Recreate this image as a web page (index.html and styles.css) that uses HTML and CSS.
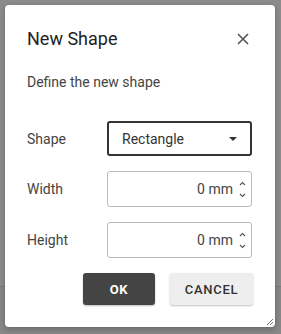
FILE: index.html
```html
<!DOCTYPE html>
<html lang="en">
<head>
    <meta charset="UTF-8">
    <title>New Shape</title>
    <link rel="stylesheet" href="styles.css">
</head>
<body>
    <div class="backdrop">
        <div class="dialog">
            <div class="dialog-header">
                <h2 class="dialog-title">New Shape</h2>
                <button class="close-btn" type="button">
                    <svg width="12" height="12" viewBox="0 0 12 12"><path d="M1 1L11 11M11 1L1 11" stroke="#555" stroke-width="1.6" fill="none"/></svg>
                </button>
            </div>
            <p class="dialog-desc">Define the new shape</p>

            <div class="form-row">
                <label class="form-label">Shape</label>
                <div class="select-box">
                    <span>Rectangle</span>
                    <svg width="8" height="4" viewBox="0 0 8 4"><path d="M0 0H8L4 4Z" fill="#333"/></svg>
                </div>
            </div>
            <div class="form-row">
                <label class="form-label">Width</label>
                <div class="number-box">
                    <span>0 mm</span>
                    <span class="spinner">
                        <svg width="7" height="5" viewBox="0 0 7 5"><path d="M1 4L3.5 1.5L6 4" stroke="#555" stroke-width="1.1" fill="none"/></svg>
                        <svg width="7" height="5" viewBox="0 0 7 5"><path d="M1 1L3.5 3.5L6 1" stroke="#555" stroke-width="1.1" fill="none"/></svg>
                    </span>
                </div>
            </div>
            <div class="form-row">
                <label class="form-label">Height</label>
                <div class="number-box">
                    <span>0 mm</span>
                    <span class="spinner">
                        <svg width="7" height="5" viewBox="0 0 7 5"><path d="M1 4L3.5 1.5L6 4" stroke="#555" stroke-width="1.1" fill="none"/></svg>
                        <svg width="7" height="5" viewBox="0 0 7 5"><path d="M1 1L3.5 3.5L6 1" stroke="#555" stroke-width="1.1" fill="none"/></svg>
                    </span>
                </div>
            </div>

            <div class="dialog-actions">
                <button class="btn btn-ok" type="button">OK</button>
                <button class="btn btn-cancel" type="button">CANCEL</button>
            </div>
            <svg class="resize-grip" width="7" height="7" viewBox="0 0 7 7"><path d="M1 7L7 1M4 7L7 4" stroke="#666" stroke-width="0.9" fill="none"/></svg>
        </div>
    </div>
</body>
</html>
```

FILE: styles.css
```css
body {
    margin: 0;
    font-family: Roboto, "Liberation Sans", sans-serif;
    background: linear-gradient(to bottom, #8c8c8c 0, #8c8c8c 286px, #777 286px, #777 287px, #888 287px);
}
.backdrop {
    width: 281px;
    height: 334px;
    padding: 5px 6px 0 5px;
    box-sizing: border-box;
}
.dialog {
    position: relative;
    width: 270px;
    height: 322px;
    background-color: #fff;
    border-radius: 4px;
    box-shadow: 0 2px 6px rgba(0, 0, 0, 0.25);
    padding: 0 22px 0 22px;
    box-sizing: border-box;
}
.dialog-header {
    display: flex;
    justify-content: space-between;
    align-items: center;
    padding-top: 23px;
}
.dialog-title {
    margin: 0;
    font-size: 18px;
    font-weight: 400;
    color: #222;
    line-height: 22px;
}
.close-btn {
    background: none;
    border: none;
    padding: 0;
    margin-right: 4px;
    width: 12px;
    height: 12px;
    display: flex;
}
.dialog-desc {
    margin: 24px 0 30px 0;
    font-size: 14px;
    color: #444;
    line-height: 17px;
}
.form-row {
    display: flex;
    align-items: center;
    margin-bottom: 15px;
}
.form-label {
    width: 80px;
    font-size: 14px;
    color: #444;
}
.select-box {
    width: 145px;
    height: 35px;
    border: 2px solid #333;
    border-radius: 3px;
    box-sizing: border-box;
    display: flex;
    justify-content: space-between;
    align-items: center;
    padding: 0 13px 0 13px;
    font-size: 14px;
    color: #333;
}
.number-box {
    width: 145px;
    height: 36px;
    border: 1px solid #bbb;
    border-radius: 3px;
    box-sizing: border-box;
    display: flex;
    justify-content: flex-end;
    align-items: center;
    padding: 0 5px 0 10px;
    font-size: 14px;
    color: #444;
}
.spinner {
    display: flex;
    flex-direction: column;
    gap: 7px;
    margin-left: 6px;
}
.spinner svg {
    display: block;
}
.dialog-actions {
    display: flex;
    justify-content: flex-end;
    gap: 15px;
}
.btn {
    height: 32px;
    border: none;
    border-radius: 3px;
    font-family: Roboto, "Liberation Sans", sans-serif;
    font-size: 13px;
    font-weight: 500;
    letter-spacing: 0.7px;
    box-shadow: 0 1px 2px rgba(0, 0, 0, 0.25);
}
.btn-ok {
    width: 72px;
    background-color: #444;
    color: #fff;
    font-weight: 700;
}
.btn-cancel {
    width: 83px;
    background-color: #eee;
    color: #333;
}
.resize-grip {
    position: absolute;
    right: 2px;
    bottom: 2px;
}
```
